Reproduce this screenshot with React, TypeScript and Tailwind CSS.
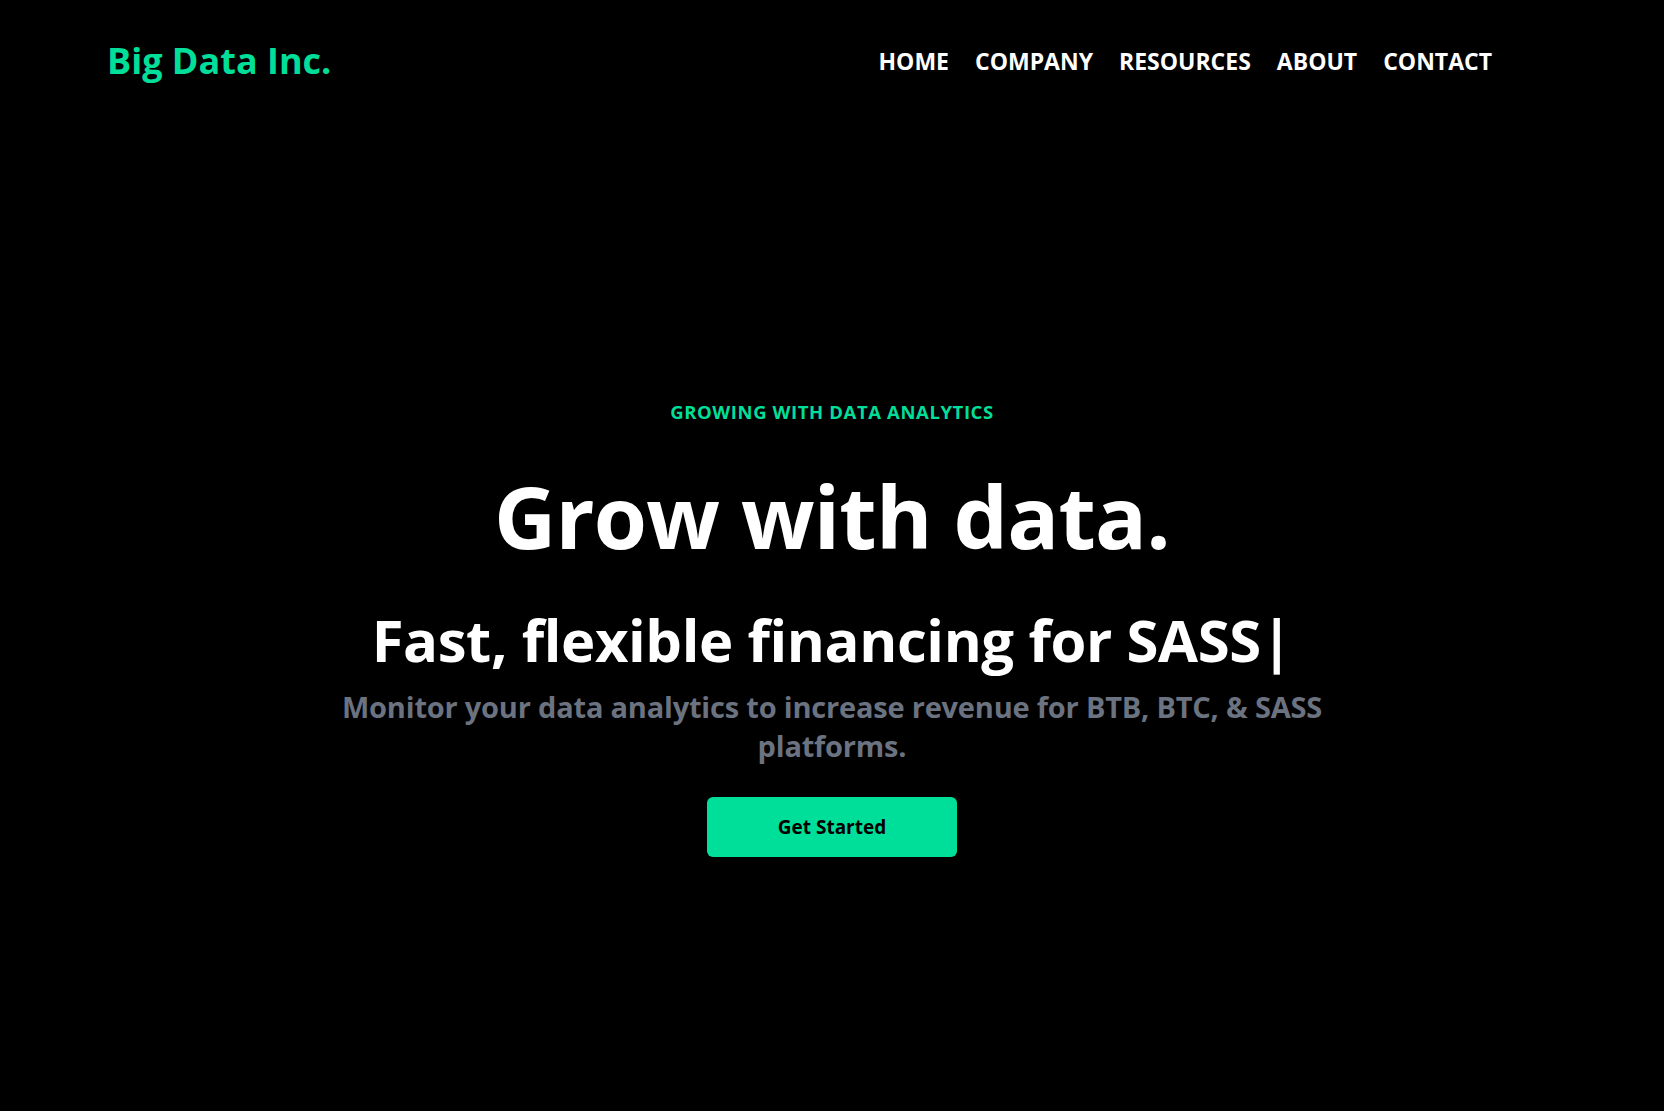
import React from "react";

const navLinks = ["Home", "Company", "Resources", "About", "Contact"];

function Navbar() {
  return (
    <header className="mx-auto flex h-[122px] max-w-[1488px] items-center justify-between px-[19px]">
      <h1 className="text-[36px] font-bold leading-10 text-[#00df9a]">
        Big Data Inc.
      </h1>
      <ul className="mr-[65px] flex gap-[26px]">
        {navLinks.map((link) => (
          <li
            key={link}
            className="text-[23px] font-bold uppercase leading-7 text-white"
          >
            {link}
          </li>
        ))}
      </ul>
    </header>
  );
}

function Hero() {
  return (
    <main className="mx-auto flex max-w-[1000px] flex-col items-center pt-[278px] text-center">
      <p className="text-[18.5px] font-bold leading-6 tracking-[0.6px] text-[#00df9a]">
        GROWING WITH DATA ANALYTICS
      </p>
      <h1 className="mt-[49px] text-[86px] font-bold leading-none tracking-[-0.7px] text-white">
        Grow with data.
      </h1>
      <div className="mt-[52px] text-[58px] font-bold leading-none tracking-[-0.4px] text-white">
        Fast, flexible financing for SASS|
      </div>
      <p className="mt-[19px] text-[29px] font-bold leading-[38.5px] tracking-[-0.2px] text-[#6b7280]">
        Monitor your data analytics to increase revenue for BTB, BTC, &amp; SASS
        platforms.
      </p>
      <button className="mt-[32px] h-[60px] w-[250px] rounded-md bg-[#00df9a] text-[19px] font-bold text-black">
        Get Started
      </button>
    </main>
  );
}

export default function App() {
  return (
    <div className="min-h-screen bg-black font-['Open_Sans',sans-serif]">
      <Navbar />
      <Hero />
    </div>
  );
}
